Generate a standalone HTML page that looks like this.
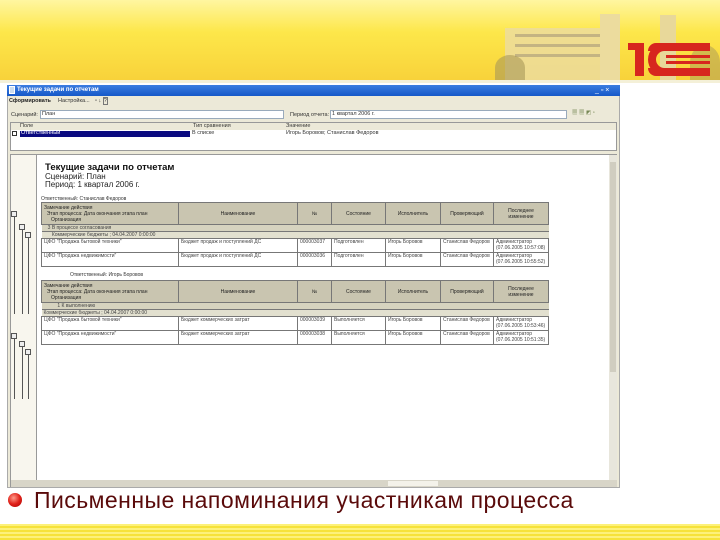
<!DOCTYPE html>
<html><head><meta charset="utf-8"><style>
*{margin:0;padding:0;box-sizing:border-box}
body{width:720px;height:540px;overflow:hidden;background:#fff;position:relative;font-family:"Liberation Sans","Noto Sans CJK SC",sans-serif}
.a{position:absolute}
.t{position:absolute;font-size:5.5px;color:#333;white-space:nowrap;line-height:7px}
table{border-collapse:collapse;position:absolute;left:41px;width:507px;font-size:5px;color:#444;table-layout:fixed}
td{border:1px solid #777;padding:0 2px;white-space:nowrap;overflow:hidden;vertical-align:top;line-height:6px}
.h td{background:#c9c5b0;text-align:center;vertical-align:middle;height:22px;color:#222}
.g td{background:#e2e0cf;height:7px;border-left:none;border-right:none}
.d td{height:14px;background:#fff}
.v{position:absolute;width:1px;background:#555}
.bx{position:absolute;width:6px;height:6px;border:1px solid #555;background:#eee}
</style></head><body>
<div class="a" style="left:0;top:0;width:720px;height:80px;background:linear-gradient(180deg,#fff6a0 0%,#fde74a 40%,#f8d23a 100%)"></div>
<div class="a" style="left:0;top:80px;width:720px;height:3px;background:#f4f0d8"></div>
<div class="a" style="left:505px;top:28px;width:110px;height:52px;background:#ecdc9e;opacity:.85"></div>
<div class="a" style="left:515px;top:34px;width:90px;height:3px;background:#c4b482"></div>
<div class="a" style="left:515px;top:44px;width:90px;height:3px;background:#c4b482"></div>
<div class="a" style="left:515px;top:54px;width:90px;height:3px;background:#c4b482"></div>
<div class="a" style="left:600px;top:14px;width:20px;height:66px;background:#ecdc9e"></div>
<div class="a" style="left:660px;top:15px;width:16px;height:65px;background:#e8d89a"></div>
<div class="a" style="left:495px;top:55px;width:30px;height:25px;background:#a89858;border-radius:50% 50% 0 0;opacity:.6"></div>
<div class="a" style="left:690px;top:45px;width:30px;height:35px;background:#a89858;border-radius:50% 50% 0 0;opacity:.5"></div>
<!-- 1C logo -->
<div class="a" style="left:628px;top:43px;width:10px;height:7px;background:#d7261e"></div>
<div class="a" style="left:635px;top:43px;width:9px;height:33px;background:#d7261e"></div>
<div class="a" style="left:648px;top:43px;width:44px;height:33px;border:8px solid #d7261e;border-right:none;border-radius:17px 0 0 17px"></div>
<div class="a" style="left:648px;top:43px;width:62px;height:8px;background:#d7261e;border-radius:17px 0 0 0"></div>
<div class="a" style="left:648px;top:68px;width:62px;height:8px;background:#d7261e;border-radius:0 0 0 17px"></div>
<div class="a" style="left:666px;top:55px;width:44px;height:3px;background:#d7261e"></div>
<div class="a" style="left:666px;top:61px;width:44px;height:3px;background:#d7261e"></div>
<!-- window -->
<div class="a" style="left:7px;top:85px;width:613px;height:403px;background:#ece9d8;border:1px solid #aaa"></div>
<div class="a" style="left:7px;top:85px;width:613px;height:11px;background:linear-gradient(#3b7de0,#1558c8)"></div>
<div class="t" style="left:17px;top:87px;color:#fff;font-weight:bold;font-size:6px">Текущие задачи по отчетам</div>
<div class="a" style="left:9px;top:86px;width:6px;height:8px;background:#cde;border:1px solid #fff"></div>
<div class="t" style="left:595px;top:87px;color:#fff;font-size:7px">_ ▫ ×</div>
<div class="t" style="left:9px;top:98px;font-weight:bold;color:#222">Сформировать</div>
<div class="t" style="left:58px;top:98px">Настройка...</div>
<div class="t" style="left:95px;top:98px">▫ ↓ <span style="border:1px solid #777">?</span></div>
<div class="t" style="left:11px;top:112px">Сценарий:</div>
<div class="a" style="left:40px;top:110px;width:244px;height:9px;background:#fff;border:1px solid #9ab"></div>
<div class="t" style="left:42px;top:111px">План</div>
<div class="t" style="left:290px;top:112px">Период отчета:</div>
<div class="a" style="left:330px;top:110px;width:237px;height:9px;background:#fff;border:1px solid #9ab"></div>
<div class="t" style="left:332px;top:111px">1 квартал 2006 г.</div>
<div class="t" style="left:572px;top:110px;color:#785">▦ ▦ ◩ ▫</div>
<div class="a" style="left:10px;top:122px;width:607px;height:29px;background:#fff;border:1px solid #999"></div>
<div class="a" style="left:11px;top:123px;width:605px;height:7px;background:#ece9d8"></div>
<div class="t" style="left:20px;top:123px">Поле</div>
<div class="t" style="left:193px;top:123px">Тип сравнения</div>
<div class="t" style="left:286px;top:123px">Значение</div>
<div class="a" style="left:20px;top:131px;width:170px;height:6px;background:#0a0a80"></div>
<div class="t" style="left:21px;top:130px;color:#fff">Ответственный</div>
<div class="a" style="left:12px;top:131px;width:5px;height:5px;border:1px solid #333"></div>
<div class="t" style="left:192px;top:130px">В списке</div>
<div class="t" style="left:286px;top:130px">Игорь Боровов; Станислав Федоров</div>
<div class="a" style="left:10px;top:154px;width:607px;height:333px;background:#fff;border:1px solid #999"></div>
<div class="a" style="left:11px;top:155px;width:26px;height:325px;background:#f8f6ee;border-right:1px solid #999"></div>
<div class="a" style="left:609px;top:155px;width:8px;height:325px;background:#e8e6dc"></div>
<div class="a" style="left:610px;top:162px;width:6px;height:210px;background:#d0cdc0"></div>
<div class="a" style="left:11px;top:480px;width:606px;height:7px;background:#d8d5c8"></div>
<div class="a" style="left:388px;top:481px;width:50px;height:5px;background:#f4f2ea"></div>
<div class="bx" style="left:11px;top:211px"></div><div class="v" style="left:14px;top:217px;height:97px"></div>
<div class="bx" style="left:19px;top:224px"></div><div class="v" style="left:22px;top:230px;height:84px"></div>
<div class="bx" style="left:25px;top:232px"></div><div class="v" style="left:28px;top:238px;height:76px"></div>
<div class="bx" style="left:11px;top:333px"></div><div class="v" style="left:14px;top:339px;height:60px"></div>
<div class="bx" style="left:19px;top:341px"></div><div class="v" style="left:22px;top:347px;height:52px"></div>
<div class="bx" style="left:25px;top:349px"></div><div class="v" style="left:28px;top:355px;height:44px"></div>
<div class="t" style="left:45px;top:163px;font-size:9.5px;font-weight:bold;color:#111;line-height:10px">Текущие задачи по отчетам</div>
<div class="t" style="left:45px;top:172px;font-size:8px;color:#222;line-height:9px">Сценарий: План</div>
<div class="t" style="left:45px;top:180px;font-size:8px;color:#222;line-height:9px">Период: 1 квартал 2006 г.</div>
<div class="t" style="left:41px;top:196px;font-size:5px">Ответственный: Станислав Федоров</div>
<table style="top:202px">
<colgroup><col style="width:137px"><col style="width:119px"><col style="width:34px"><col style="width:54px"><col style="width:55px"><col style="width:53px"><col style="width:55px"></colgroup>
<tr class="h"><td style="text-align:left">Замечание действия<br>&nbsp; Этап процесса: Дата окончания этапа план<br>&nbsp;&nbsp;&nbsp;&nbsp; Организация</td><td>Наименование</td><td>№</td><td>Состояние</td><td>Исполнитель</td><td>Проверяющий</td><td>Последнее<br>изменение</td></tr>
<tr class="g"><td colspan="7" style="background:#d6d3bf">&nbsp;&nbsp; 3 В процессе согласования</td></tr>
<tr class="g"><td colspan="7">&nbsp;&nbsp;&nbsp;&nbsp;&nbsp; Коммерческие бюджеты ; 04.04.2007 0:00:00</td></tr>
<tr class="d"><td>ЦФО "Продажа бытовой техники"</td><td>Бюджет продаж и поступлений ДС</td><td>000003037</td><td>Подготовлен</td><td>Игорь Боровов</td><td>Станислав Федоров</td><td>Администратор<br>(07.06.2005 10:57:08)</td></tr>
<tr class="d"><td>ЦФО "Продажа недвижимости"</td><td>Бюджет продаж и поступлений ДС</td><td>000003036</td><td>Подготовлен</td><td>Игорь Боровов</td><td>Станислав Федоров</td><td>Администратор<br>(07.06.2005 10:55:52)</td></tr>
</table>
<div class="t" style="left:70px;top:272px;font-size:5px">Ответственный: Игорь Боровов</div>
<table style="top:280px">
<colgroup><col style="width:137px"><col style="width:119px"><col style="width:34px"><col style="width:54px"><col style="width:55px"><col style="width:53px"><col style="width:55px"></colgroup>
<tr class="h"><td style="text-align:left">Замечание действия<br>&nbsp; Этап процесса: Дата окончания этапа план<br>&nbsp;&nbsp;&nbsp;&nbsp; Организация</td><td>Наименование</td><td>№</td><td>Состояние</td><td>Исполнитель</td><td>Проверяющий</td><td>Последнее<br>изменение</td></tr>
<tr class="g"><td colspan="7" style="background:#d6d3bf">&nbsp;&nbsp;&nbsp;&nbsp;&nbsp;&nbsp;&nbsp;&nbsp;&nbsp; 1 К выполнению</td></tr>
<tr class="g"><td colspan="7">Коммерческие бюджеты ; 04.04.2007 0:00:00</td></tr>
<tr class="d"><td>ЦФО "Продажа бытовой техники"</td><td>Бюджет коммерческих затрат</td><td>000003039</td><td>Выполняется</td><td>Игорь Боровов</td><td>Станислав Федоров</td><td>Администратор<br>(07.06.2005 10:53:46)</td></tr>
<tr class="d"><td>ЦФО "Продажа недвижимости"</td><td>Бюджет коммерческих затрат</td><td>000003038</td><td>Выполняется</td><td>Игорь Боровов</td><td>Станислав Федоров</td><td>Администратор<br>(07.06.2005 10:51:35)</td></tr>
</table>
<div class="a" style="left:8px;top:493px;width:14px;height:14px;border-radius:50%;background:radial-gradient(circle at 40% 35%,#ff9a8a,#e0221a 50%,#a00 100%)"></div>
<div class="t" style="left:34px;top:486px;font-size:23px;letter-spacing:0.45px;line-height:28px;color:#5a0a0a">Письменные напоминания участникам процесса</div>
<div class="a" style="left:0;top:524px;width:720px;height:16px;background:repeating-linear-gradient(180deg,#fdf17a 0,#fdf17a 2px,#f6e23a 2px,#f6e23a 4px)"></div>
</body></html>
